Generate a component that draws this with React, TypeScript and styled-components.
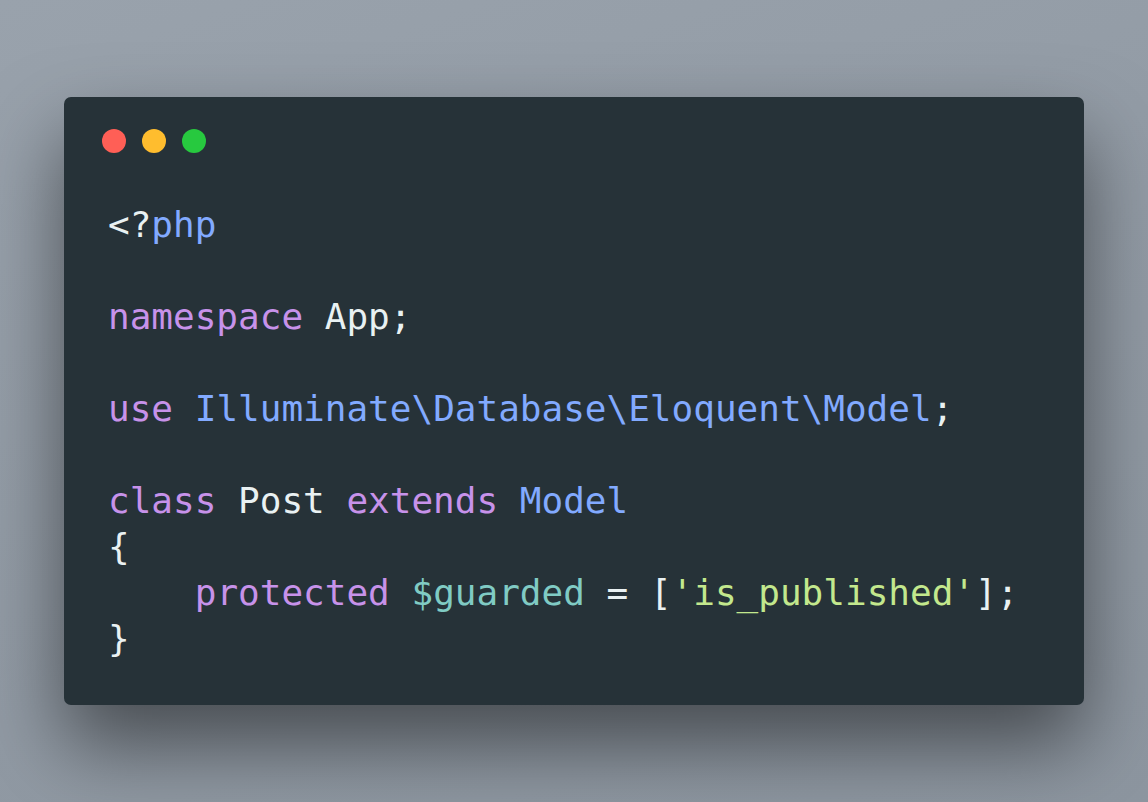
import React from "react";
import styled, { createGlobalStyle } from "styled-components";

const Global = createGlobalStyle`
  html, body { margin: 0; padding: 0; }
  body {
    width: 1148px;
    height: 802px;
    overflow: hidden;
    background: linear-gradient(160deg, #99a2ac 0%, #929ba5 50%, #8d96a0 100%);
  }
`;

const Stage = styled.div`
  width: 1148px;
  height: 802px;
  box-sizing: border-box;
  padding: 97px 64px 0 64px;
  display: flex;
  align-items: flex-start;
`;

const Window = styled.div`
  width: 1020px;
  height: 608px;
  box-sizing: border-box;
  background: #263238;
  border-radius: 7px;
  box-shadow: 0 40px 80px rgba(0, 0, 0, 0.5);
  padding: 32px 0 0 38px;
  display: flex;
  flex-direction: column;
`;

const Controls = styled.div`
  display: flex;
  gap: 16px;
`;

const Dot = styled.span<{ $color: string }>`
  width: 24px;
  height: 24px;
  border-radius: 50%;
  background: ${(p) => p.$color};
`;

const Code = styled.pre`
  margin: 49px 0 0 6px;
  font-family: "DejaVu Sans Mono", monospace;
  font-size: 36px;
  line-height: 46px;
  color: #e9f1f2;
  white-space: pre;
`;

const Tok = styled.span<{ $c: string }>`
  color: ${(p) => p.$c};
`;

const K = "#c792ea";
const B = "#82aaff";
const T = "#80cbc4";
const G = "#c3e88d";
const W = "#e9f1f2";

export default function App() {
  return (
    <>
      <Global />
      <Stage>
        <Window>
          <Controls>
            <Dot $color="#ff5f56" />
            <Dot $color="#ffbd2e" />
            <Dot $color="#27c93f" />
          </Controls>
          <Code>
            <Tok $c={W}>{"<?"}</Tok>
            <Tok $c={B}>php</Tok>
            {"\n\n"}
            <Tok $c={K}>namespace</Tok>
            <Tok $c={W}>{" App;"}</Tok>
            {"\n\n"}
            <Tok $c={K}>use</Tok>{" "}
            <Tok $c={B}>{"Illuminate\\Database\\Eloquent\\Model"}</Tok>
            <Tok $c={W}>;</Tok>
            {"\n\n"}
            <Tok $c={K}>class</Tok>
            <Tok $c={W}>{" Post "}</Tok>
            <Tok $c={K}>extends</Tok>{" "}
            <Tok $c={B}>Model</Tok>
            {"\n"}
            <Tok $c={W}>{"{"}</Tok>
            {"\n    "}
            <Tok $c={K}>protected</Tok>{" "}
            <Tok $c={T}>$guarded</Tok>
            <Tok $c={W}>{" = ["}</Tok>
            <Tok $c={G}>'is_published'</Tok>
            <Tok $c={W}>];</Tok>
            {"\n"}
            <Tok $c={W}>{"}"}</Tok>
          </Code>
        </Window>
      </Stage>
    </>
  );
}
